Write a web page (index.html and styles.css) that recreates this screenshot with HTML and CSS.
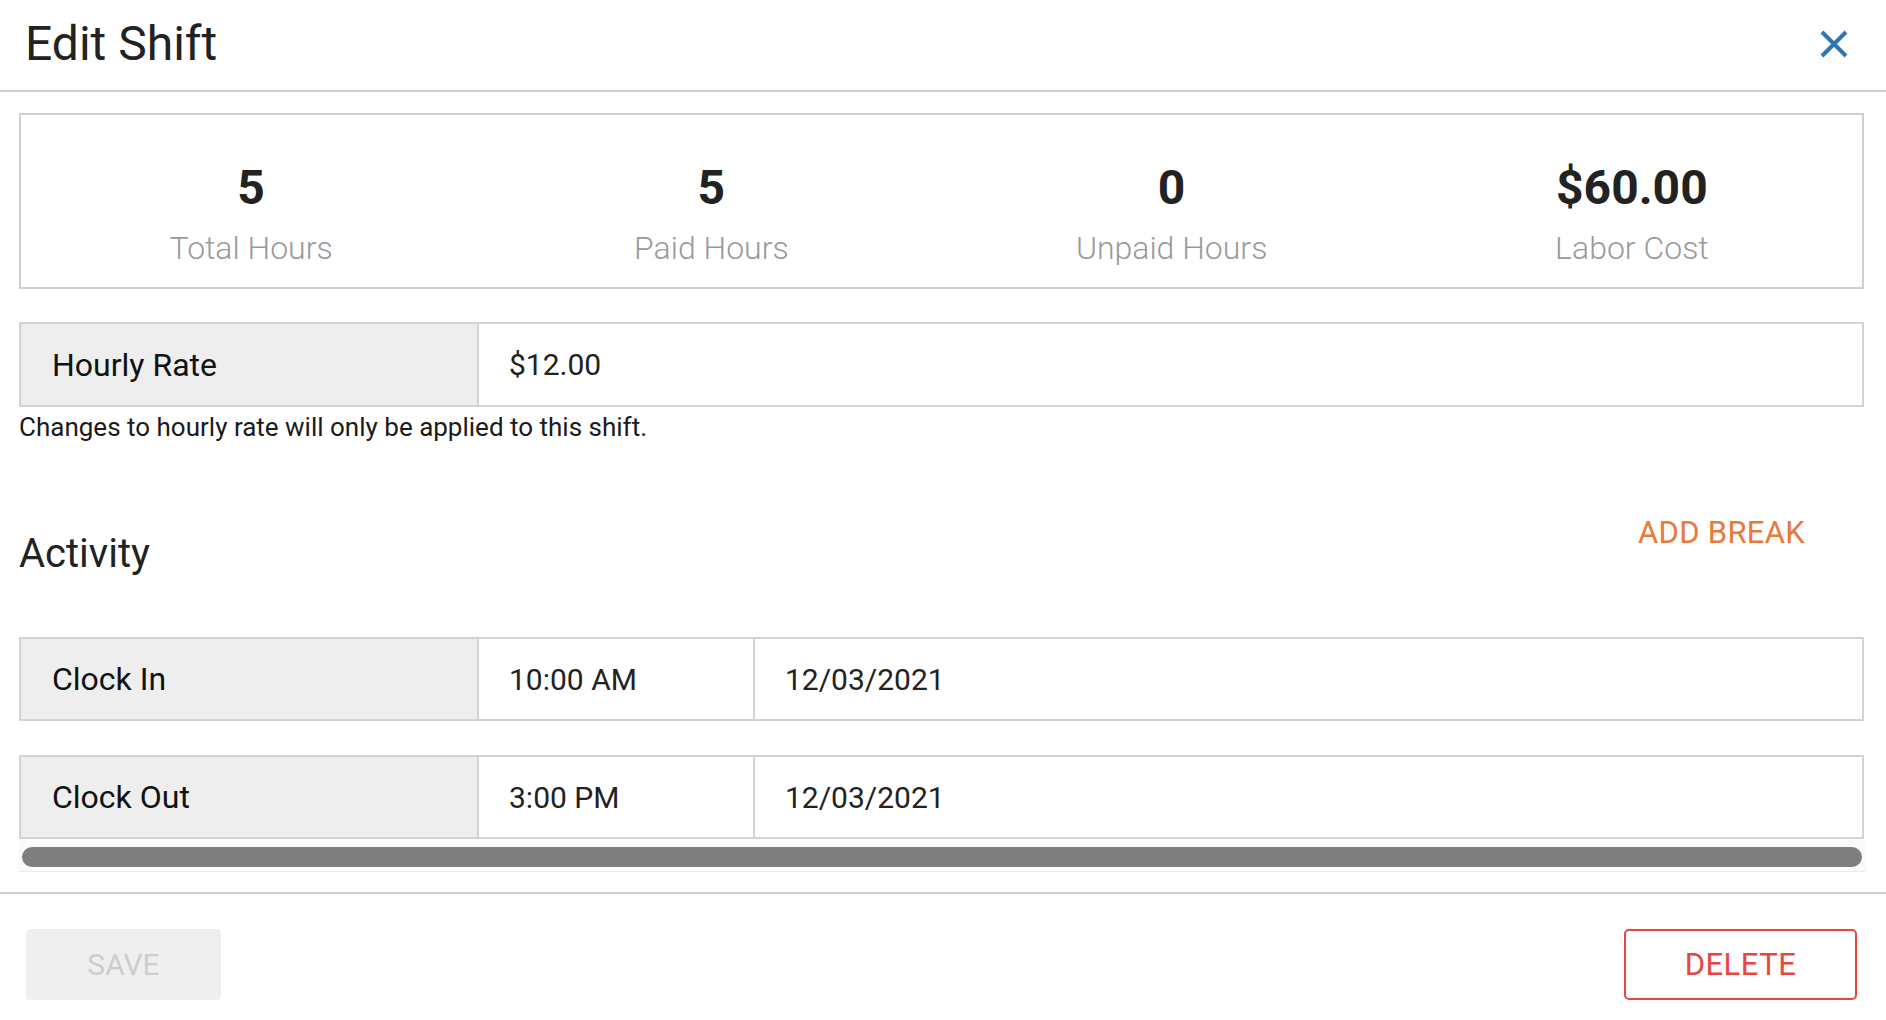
FILE: index.html
```html
<!DOCTYPE html>
<html lang="en">
<head>
<meta charset="utf-8">
<title>Edit Shift</title>
<link rel="stylesheet" href="styles.css">
</head>
<body>
<div class="dialog">
  <header class="dlg-header">
    <h1 class="dlg-title">Edit Shift</h1>
    <button class="close-btn" aria-label="Close">
      <svg width="28" height="28" viewBox="0 0 28 28"><path d="M2 2 L26 26 M26 2 L2 26" stroke="#2e75b6" stroke-width="4" fill="none"/></svg>
    </button>
  </header>

  <div class="dlg-body">
    <div class="summary">
      <div class="stat"><div class="stat-value">5</div><div class="stat-label">Total Hours</div></div>
      <div class="stat"><div class="stat-value">5</div><div class="stat-label">Paid Hours</div></div>
      <div class="stat"><div class="stat-value">0</div><div class="stat-label">Unpaid Hours</div></div>
      <div class="stat"><div class="stat-value">$60.00</div><div class="stat-label">Labor Cost</div></div>
    </div>

    <div class="field-row">
      <div class="cell cell-label">Hourly Rate</div>
      <div class="cell cell-value cell-grow">$12.00</div>
    </div>
    <p class="hint">Changes to hourly rate will only be applied to this shift.</p>

    <div class="activity-head">
      <h2 class="activity-title">Activity</h2>
      <button class="add-break">ADD BREAK</button>
    </div>

    <div class="scroll-area">
      <div class="field-row time-row">
        <div class="cell cell-label">Clock In</div>
        <div class="cell cell-value cell-time">10:00 AM</div>
        <div class="cell cell-value cell-grow">12/03/2021</div>
      </div>
      <div class="field-row time-row second">
        <div class="cell cell-label">Clock Out</div>
        <div class="cell cell-value cell-time">3:00 PM</div>
        <div class="cell cell-value cell-grow">12/03/2021</div>
      </div>
      <div class="scrollbar"><div class="thumb"></div></div>
    </div>
  </div>

  <footer class="dlg-footer">
    <button class="btn-save" disabled>SAVE</button>
    <button class="btn-delete">DELETE</button>
  </footer>
</div>
</body>
</html>
```
FILE: styles.css
```css
* { box-sizing: border-box; }
html, body { margin: 0; padding: 0; background: #fff; }
body { font-family: Roboto, "Liberation Sans", sans-serif; color: #222; }

.dialog { width: 1886px; height: 1020px; background: #fff; }

.dlg-header {
  height: 92px;
  border-bottom: 2px solid #cfcfcf;
  display: flex;
  align-items: center;
  justify-content: space-between;
  padding: 0 38px 2px 25px;
}
.dlg-title { margin: 0; font-size: 48px; font-weight: 400; line-height: 56px; color: #222; }
.close-btn { border: 0; background: none; padding: 0; width: 28px; height: 28px; display: flex; cursor: pointer; }

.dlg-body { padding: 0 22px 0 19px; }

.summary {
  margin-top: 21px;
  height: 176px;
  border: 2px solid #d0d0d0;
  display: grid;
  grid-template-columns: repeat(4, 1fr);
  padding-top: 43px;
}
.stat { text-align: center; }
.stat-value { font-size: 48px; font-weight: 700; line-height: 60px; color: #222; }
.stat-label { font-size: 32px; font-weight: 300; line-height: 60px; color: #9a9a9a; }

.field-row {
  margin-top: 33px;
  height: 85px;
  border: 2px solid #d3d3d3;
  display: flex;
}
.cell { display: flex; align-items: center; font-size: 32px; color: #111; }
.cell-label { width: 458px; background: #eeeeee; padding-left: 31px; border-right: 2px solid #d3d3d3; }
.cell-value { padding-left: 30px; font-size: 30px; color: #222; }
.cell-time { width: 276px; border-right: 2px solid #d3d3d3; }
.cell-grow { flex: 1; }

.hint { margin: 5px 0 0; font-size: 26px; line-height: 30px; color: #1a1a1a; }

.activity-head {
  margin-top: 71px;
  display: flex;
  justify-content: space-between;
  align-items: flex-start;
}
.activity-title { margin: 17px 0 0; font-size: 40px; font-weight: 400; line-height: 48px; color: #222; }
.add-break {
  margin-right: 59px;
  border: 0; background: none; padding: 0;
  font-family: Roboto, "Liberation Sans", sans-serif;
  font-size: 31px; line-height: 40px; color: #e8793a;
  letter-spacing: 0.3px;
}

.scroll-area { margin-top: 59px; }
.time-row { margin-top: 0; height: 84px; }
.time-row.second { margin-top: 34px; }

.scrollbar {
  height: 33px;
  background: #fafafa;
  border-bottom: 1px solid #ececec;
  padding: 8px 4px 0 3px;
  margin-right: -2px;
}
.thumb { height: 20px; border-radius: 10px; background: #7f7f7f; }

.dlg-footer {
  margin-top: 20px;
  border-top: 2px solid #cfcfcf;
  display: flex;
  justify-content: space-between;
  padding: 35px 29px 0 26px;
}
.btn-save {
  width: 195px; height: 71px;
  border: 0; border-radius: 4px;
  background: #efefef; color: #cdcdcd;
  font-family: Roboto, "Liberation Sans", sans-serif; font-size: 30px;
}
.btn-delete {
  width: 233px; height: 71px;
  border: 2px solid #e8463f; border-radius: 5px;
  background: #fff; color: #e8463f;
  font-family: Roboto, "Liberation Sans", sans-serif; font-size: 31px;
  letter-spacing: 0.5px;
}
```
